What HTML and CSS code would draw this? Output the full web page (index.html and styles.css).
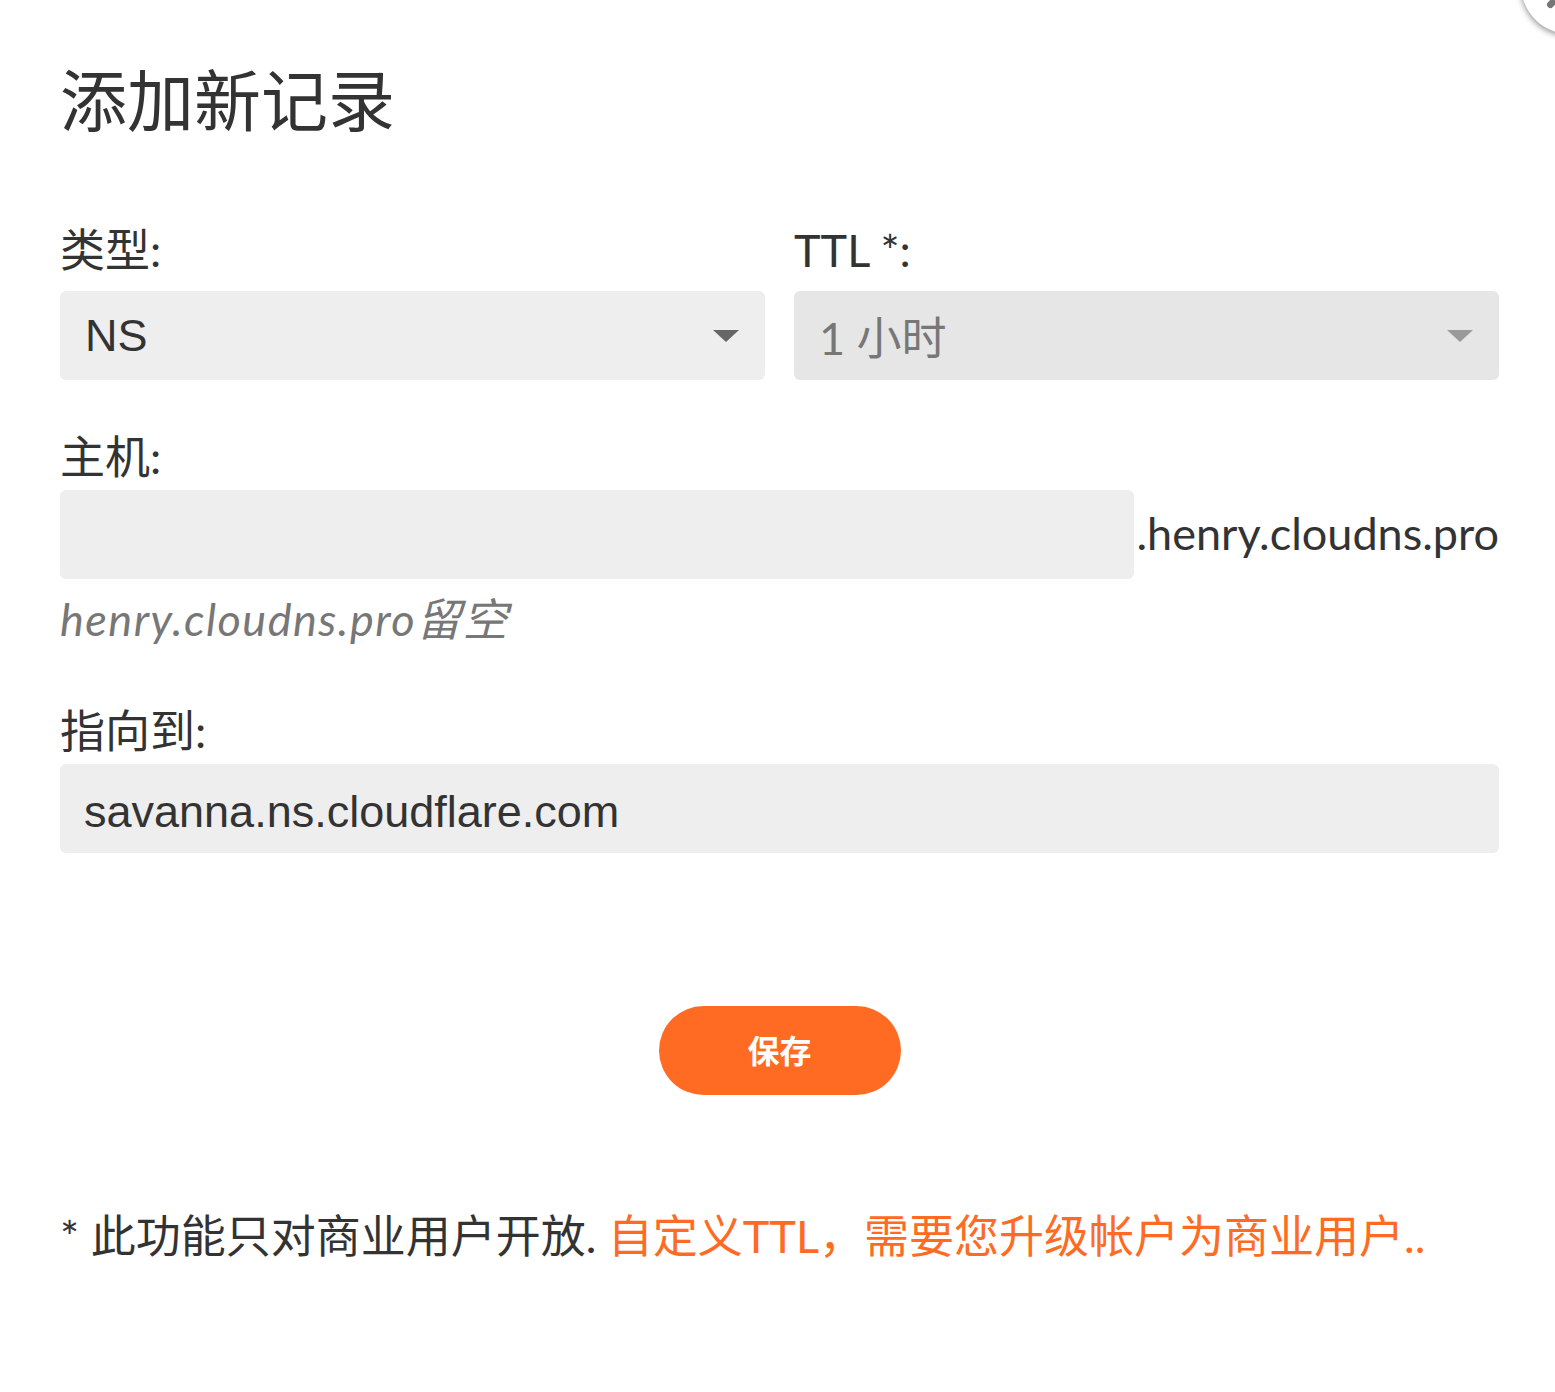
FILE: index.html
```html
<!DOCTYPE html>
<html lang="zh">
<head>
<meta charset="utf-8">
<title>添加新记录</title>
<link rel="stylesheet" href="styles.css">
</head>
<body>
<div class="modal">
  <button class="close" aria-label="关闭">
    <svg viewBox="0 0 100 100" width="100" height="100"><path d="M30 30 L70 70 M70 30 L30 70" stroke="#777" stroke-width="7" stroke-linecap="round" fill="none"/></svg>
  </button>
  <h1 class="title">添加新记录</h1>
  <div class="row">
    <div class="field">
      <label class="label">类型:</label>
      <div class="select">
        <span class="select-text">NS</span>
        <span class="caret"></span>
      </div>
    </div>
    <div class="field">
      <label class="label">TTL *:</label>
      <div class="select disabled">
        <span class="select-text">1 小时</span>
        <span class="caret"></span>
      </div>
    </div>
  </div>
  <div class="field host-field">
    <label class="label">主机:</label>
    <div class="host-row">
      <div class="input host-input"></div>
      <span class="suffix">.henry.cloudns.pro</span>
    </div>
    <div class="hint">henry.cloudns.pro留空</div>
  </div>
  <div class="field target-field">
    <label class="label">指向到:</label>
    <div class="input"><span class="input-text">savanna.ns.cloudflare.com</span></div>
  </div>
  <div class="actions">
    <button class="save">保存</button>
  </div>
  <p class="note">* 此功能只对商业用户开放. <span class="accent">自定义TTL，需要您升级帐户为商业用户..</span></p>
</div>
</body>
</html>
```

FILE: styles.css
```css
html, body {
  margin: 0;
  padding: 0;
  background: #fff;
}
body {
  font-family: Lato, "Noto Sans CJK SC", sans-serif;
  color: #333;
  overflow: hidden;
}
.modal {
  position: relative;
  padding: 0 56px 0 60px;
  height: 1392px;
  box-sizing: border-box;
}
.close {
  position: absolute;
  left: 1521px;
  top: -64px;
  width: 98px;
  height: 98px;
  border-radius: 50%;
  background: #fff;
  border: none;
  padding: 0;
  box-shadow: 0 2px 6px rgba(0,0,0,0.45);
  display: flex;
  align-items: center;
  justify-content: center;
}
.title {
  margin: 0;
  padding-top: 57px;
  font-size: 67px;
  line-height: 86px;
  font-weight: 400;
  font-family: Lato, "Noto Sans CJK SC", sans-serif;
  color: #333;
}
.row {
  display: grid;
  grid-template-columns: 1fr 1fr;
  column-gap: 29px;
  margin-top: 77px;
}
.field {
  display: flex;
  flex-direction: column;
}
.label {
  font-size: 45px;
  line-height: 60px;
  margin-bottom: 3px;
  color: #333;
}
.row .label {
  margin-bottom: 11px;
}
.select {
  height: 89px;
  background: #eee;
  border-radius: 6px;
  display: flex;
  align-items: center;
  justify-content: space-between;
  padding: 0 26px 0 25px;
}
.select.disabled {
  background: #e6e6e6;
}
.select-text {
  font-family: "Liberation Sans", "Noto Sans CJK SC", sans-serif;
  font-size: 45px;
  color: #333;
}
.disabled .select-text {
  color: #777;
  font-family: Lato, "Noto Sans CJK SC", sans-serif;
}
.caret {
  width: 0;
  height: 0;
  border-left: 13px solid transparent;
  border-right: 13px solid transparent;
  border-top: 12px solid #666;
}
.disabled .caret {
  border-top-color: #9a9a9a;
}
.host-field {
  margin-top: 47px;
}
.host-row {
  display: flex;
  align-items: center;
}
.input {
  height: 89px;
  background: #eee;
  border-radius: 6px;
  display: flex;
  align-items: center;
  padding: 0 24px;
}
.host-input {
  flex: 1;
  padding: 0;
}
.suffix {
  font-size: 45px;
  color: #333;
  padding-left: 2px;
  padding-bottom: 4px;
}
.input-text {
  font-family: "Liberation Sans", sans-serif;
  font-size: 45px;
  color: #333;
  padding-top: 6px;
}
.hint {
  font-size: 45px;
  font-style: italic;
  color: #777;
  line-height: 60px;
  margin-top: 10px;
  letter-spacing: 1.5px;
}
.target-field {
  margin-top: 52px;
}
.actions {
  display: flex;
  justify-content: center;
  margin-top: 153px;
}
.save {
  width: 242px;
  height: 89px;
  border-radius: 45px;
  background: #ff6b22;
  border: none;
  color: #fff;
  font-family: "Noto Sans CJK SC", sans-serif;
  font-weight: 700;
  font-size: 32px;
  padding: 0 0 4px;
}
.note {
  margin: 111px 0 0;
  font-size: 45px;
  line-height: 60px;
  color: #333;
}
.accent {
  color: #ff6b22;
}
```
